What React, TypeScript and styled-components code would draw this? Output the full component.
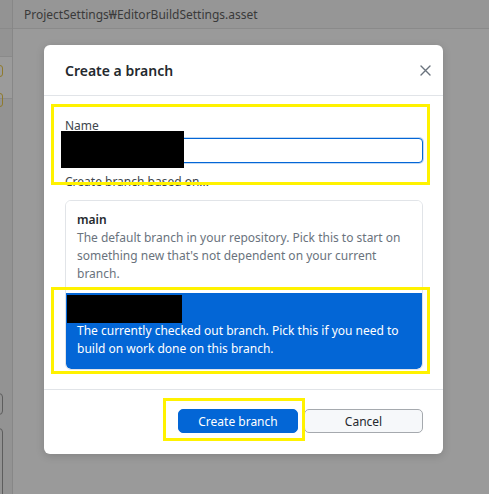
import React, { FunctionComponent } from 'react';
import styled, { createGlobalStyle } from 'styled-components';

const GlobalStyle = createGlobalStyle`
  html, body {
    margin: 0;
    padding: 0;
    width: 489px;
    height: 494px;
    overflow: hidden;
    background: #9a9a9a;
    font-family: "Noto Sans", "Liberation Sans", sans-serif;
  }
  * {
    box-sizing: border-box;
  }
`;

const Screen = styled.div`
    display: grid;
    grid-template-columns: 13px 1fr;
    width: 489px;
    height: 494px;
    overflow: hidden;
  `,
  LeftStrip = styled.div`
    position: relative;
    display: flex;
    flex-direction: column;
    background: #939393;
    border-right: 1px solid #878787;
  `,
  StripRow = styled.div`
    height: ${(props: { h: number; lit?: boolean }) => props.h}px;
    background: ${(props: { h: number; lit?: boolean }) => (props.lit ? '#9b9b9b' : 'transparent')};
    border-bottom: 1px solid #8a8a8a;
  `,
  StripMark = styled.span`
    position: absolute;
    left: -5px;
    top: ${(props: { top: number; height: number }) => props.top}px;
    width: 8px;
    height: ${(props: { top: number; height: number }) => props.height}px;
    border: 1px solid #8f7a2c;
    border-radius: 3px;
  `,
  StripOutline = styled.span`
    position: absolute;
    left: -6px;
    top: ${(props: { top: number; height: number }) => props.top}px;
    width: 9px;
    height: ${(props: { top: number; height: number }) => props.height}px;
    border: 1px solid #5d5d5d;
    border-radius: 4px;
  `,
  MainColumn = styled.div`
    display: flex;
    flex-direction: column;
    min-width: 0;
  `,
  TopBar = styled.div`
    height: 29px;
    flex: none;
    display: flex;
    align-items: center;
    padding-left: 11px;
    background: #969696;
    border-bottom: 1px solid #8a8a8a;
    color: #3a3a3a;
    font-size: 12px;
    white-space: nowrap;
  `,
  Backdrop = styled.div`
    flex: 1;
    padding: 16px 0 0 31px;
  `,
  Dialog = styled.div`
    position: relative;
    width: 399px;
    height: 409px;
    display: flex;
    flex-direction: column;
    background: #fff;
    border-radius: 6px;
    box-shadow: 0 2px 8px rgba(0, 0, 0, 0.15);
    color: #24292e;
  `,
  DialogHeader = styled.header`
    height: 51px;
    flex: none;
    display: flex;
    align-items: center;
    justify-content: space-between;
    padding: 0 8px 0 21px;
    border-bottom: 1px solid #e1e4e8;
  `,
  DialogTitle = styled.h1`
    margin: 0;
    font-size: 14px;
    font-weight: 600;
    color: #24292e;
  `,
  CloseButton = styled.button`
    width: 20px;
    height: 20px;
    padding: 0;
    border: 0;
    background: none;
    display: flex;
    align-items: center;
    justify-content: center;
    color: #6a737d;
  `,
  DialogContent = styled.div`
    padding: 21px 20px 19px 21px;
    border-bottom: 1px solid #e1e4e8;
  `,
  FieldLabel = styled.label`
    display: block;
    font-size: 12px;
    line-height: 18px;
    color: #40464d;
  `,
  NameInput = styled.input`
    display: block;
    width: 100%;
    height: 25px;
    margin: 3px 0 10px;
    padding: 0 8px;
    border: 1px solid #0366d6;
    border-radius: 4px;
    outline: none;
    box-shadow: 0 0 0 1px rgba(3, 102, 214, 0.25);
    font: inherit;
    font-size: 12px;
  `,
  BranchList = styled.div`
    margin-top: 9px;
    border: 1px solid #e1e4e8;
    border-radius: 6px;
    overflow: hidden;
  `,
  BranchItem = styled.div`
    position: relative;
    padding: ${(props: { selected?: boolean }) => (props.selected ? '11px' : '10px 11px')};
    background: ${(props: { selected?: boolean }) => (props.selected ? '#0366d6' : '#fff')};
    color: ${(props: { selected?: boolean }) => (props.selected ? '#fff' : '#24292e')};
    border-radius: ${(props: { selected?: boolean }) => (props.selected ? '0 0 5px 5px' : '0')};
  `,
  BranchName = styled.div`
    font-size: 12px;
    font-weight: 600;
    line-height: 18px;
    min-height: 18px;
  `,
  BranchDescription = styled.div`
    font-size: 12px;
    line-height: 18px;
    color: ${(props: { selected?: boolean }) => (props.selected ? '#fff' : '#6a737d')};
  `,
  DialogFooter = styled.footer`
    display: flex;
    justify-content: flex-end;
    gap: 6px;
    padding: 19px 20px 0 0;
  `,
  Button = styled.button`
    width: ${(props: { primary?: boolean }) => (props.primary ? '120px' : '119px')};
    height: 24px;
    padding: 0;
    border-radius: 5px;
    border: 1px solid ${(props: { primary?: boolean }) => (props.primary ? '#0366d6' : '#a5a9ae')};
    background: ${(props: { primary?: boolean }) => (props.primary ? '#0366d6' : '#f6f8fa')};
    color: ${(props: { primary?: boolean }) => (props.primary ? '#fff' : '#24292e')};
    font-family: inherit;
    font-size: 12px;
  `,
  Highlight = styled.div`
    position: absolute;
    left: ${(props: { x: number; y: number; w: number; h: number }) => props.x}px;
    top: ${(props: { x: number; y: number; w: number; h: number }) => props.y}px;
    width: ${(props: { x: number; y: number; w: number; h: number }) => props.w}px;
    height: ${(props: { x: number; y: number; w: number; h: number }) => props.h}px;
    border: 3px solid #fff200;
    pointer-events: none;
  `,
  Redaction = styled.div`
    position: absolute;
    left: ${(props: { x: number; y: number; w: number; h: number }) => props.x}px;
    top: ${(props: { x: number; y: number; w: number; h: number }) => props.y}px;
    width: ${(props: { x: number; y: number; w: number; h: number }) => props.w}px;
    height: ${(props: { x: number; y: number; w: number; h: number }) => props.h}px;
    background: #000;
  `;

const CloseIcon: FunctionComponent = () => (
  <svg width="11" height="11" viewBox="0 0 11 11">
    <path d="M1 1 L10 10 M10 1 L1 10" stroke="currentColor" strokeWidth="1.4" strokeLinecap="round" />
  </svg>
);

const App: FunctionComponent = () => {
  return (
    <>
      <GlobalStyle />
      <Screen>
        <LeftStrip>
          <StripRow h={29} />
          <StripRow h={28} />
          <StripRow h={42} lit />
          <StripMark top={65} height={12} />
          <StripMark top={93} height={14} />
          <StripOutline top={393} height={22} />
          <StripOutline top={428} height={90} />
        </LeftStrip>
        <MainColumn>
          <TopBar>ProjectSettings₩EditorBuildSettings.asset</TopBar>
          <Backdrop>
            <Dialog>
              <DialogHeader>
                <DialogTitle>Create a branch</DialogTitle>
                <CloseButton aria-label="Close">
                  <CloseIcon />
                </CloseButton>
              </DialogHeader>
              <DialogContent>
                <FieldLabel>Name</FieldLabel>
                <NameInput defaultValue="" />
                <FieldLabel>Create branch based on...</FieldLabel>
                <BranchList>
                  <BranchItem>
                    <BranchName>main</BranchName>
                    <BranchDescription>
                      The default branch in your repository. Pick this to start on something new that's not
                      dependent on your current branch.
                    </BranchDescription>
                  </BranchItem>
                  <BranchItem selected>
                    <BranchName />
                    <BranchDescription selected>
                      The currently checked out branch. Pick this if you need to build on work done on this
                      branch.
                    </BranchDescription>
                    <Redaction x={1} y={2} w={115} h={28} />
                  </BranchItem>
                </BranchList>
              </DialogContent>
              <DialogFooter>
                <Button primary>Create branch</Button>
                <Button>Cancel</Button>
              </DialogFooter>
              <Redaction x={17} y={86} w={123} h={37} />
              <Highlight x={7} y={59} w={379} h={81} />
              <Highlight x={7} y={242} w={379} h={87} />
              <Highlight x={119} y={353} w={142} h={43} />
            </Dialog>
          </Backdrop>
        </MainColumn>
      </Screen>
    </>
  );
};

export default App;
